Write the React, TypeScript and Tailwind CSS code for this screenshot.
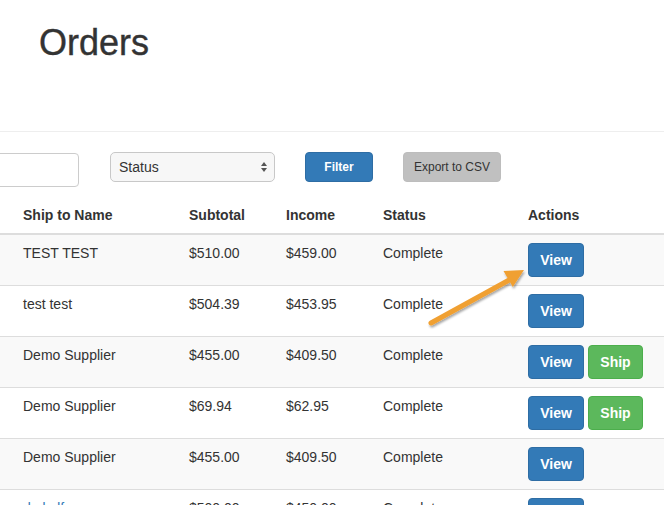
import React from "react";

type Row = { name: string; sub: string; inc: string; ship: boolean; link?: boolean };

const rows: Row[] = [
  { name: "TEST TEST", sub: "$510.00", inc: "$459.00", ship: false },
  { name: "test test", sub: "$504.39", inc: "$453.95", ship: false },
  { name: "Demo Supplier", sub: "$455.00", inc: "$409.50", ship: true },
  { name: "Demo Supplier", sub: "$69.94", inc: "$62.95", ship: true },
  { name: "Demo Supplier", sub: "$455.00", inc: "$409.50", ship: false },
  { name: "dsdsdf", sub: "$500.00", inc: "$450.00", ship: false, link: true },
];

const cols = "grid grid-cols-[181px_97px_97px_145px_1fr]";

export default function App() {
  return (
    <div className="relative w-[664px] h-[505px] overflow-hidden bg-white text-[#333] font-['Liberation_Sans',Arial,sans-serif] text-[14px]">
      <h1 className="pl-[39px] pt-[23px] text-[36px] leading-[40px] font-medium [-webkit-text-stroke:0.4px_#333]">
        Orders
      </h1>
      <div className="mt-[68px] border-t border-[#eee]" />

      <div className="mt-5 flex items-start">
        <div className="-ml-[41px] mt-px h-[34px] w-[120px] rounded-[4px] border border-[#ccc] bg-white" />
        <div className="ml-[31px] flex h-[30px] w-[165px] items-center justify-between rounded-[5px] border border-[#c8c8c8] bg-[#f7f7f7] pl-2 pr-[6px] leading-5">
          <span>Status</span>
          <svg width="8" height="12" viewBox="0 0 8 12">
            <path d="M4 1 L7 5 L1 5 Z" fill="#555" />
            <path d="M4 11 L7 7 L1 7 Z" fill="#555" />
          </svg>
        </div>
        <div className="ml-[30px] flex h-[30px] w-[68px] items-center justify-center rounded-[4px] border border-[#2e6da4] bg-[#337ab7] text-[12px] font-bold text-white">
          Filter
        </div>
        <div className="ml-[30px] flex h-[30px] w-[98px] items-center justify-center rounded-[4px] border border-[#bdbdbd] bg-[#c0c0c0] text-[12px] text-[#333]">
          Export to CSV
        </div>
      </div>

      <div className="mt-[10px]">
        <div className={`${cols} border-b-2 border-[#ddd] py-2 font-bold leading-5`}>
          <div className="pl-[23px]">Ship to Name</div>
          <div className="pl-2">Subtotal</div>
          <div className="pl-2">Income</div>
          <div className="pl-2">Status</div>
          <div className="pl-2">Actions</div>
        </div>
        {rows.map((r, i) => (
          <div
            key={i}
            className={`${cols} border-b border-[#ddd] py-2 leading-5 ${i % 2 === 0 ? "bg-[#f9f9f9]" : "bg-white"}`}
          >
            <div className={`pl-[23px] ${r.link ? "text-[#337ab7]" : ""}`}>{r.name}</div>
            <div className="pl-2">{r.sub}</div>
            <div className="pl-2">{r.inc}</div>
            <div className="pl-2">Complete</div>
            <div className="flex gap-1 pl-2">
              <div className="flex h-[34px] w-[56px] items-center justify-center rounded-[4px] border border-[#2e6da4] bg-[#337ab7] font-bold text-white">
                View
              </div>
              {r.ship && (
                <div className="flex h-[34px] w-[55px] items-center justify-center rounded-[4px] border border-[#4cae4c] bg-[#5cb85c] font-bold text-white">
                  Ship
                </div>
              )}
            </div>
          </div>
        ))}
      </div>

      <svg className="pointer-events-none absolute inset-0" width="664" height="505" viewBox="0 0 664 505">
        <defs>
          <filter id="sh" x="-20%" y="-20%" width="140%" height="140%">
            <feDropShadow dx="1" dy="2" stdDeviation="1.2" floodColor="#000" floodOpacity="0.35" />
          </filter>
        </defs>
        <g filter="url(#sh)">
          <line x1="431" y1="323" x2="511" y2="279" stroke="#f0a033" strokeWidth="5" strokeLinecap="round" />
          <polygon points="524,270 503.5,271 512.8,287" fill="#f0a033" />
        </g>
      </svg>
    </div>
  );
}
